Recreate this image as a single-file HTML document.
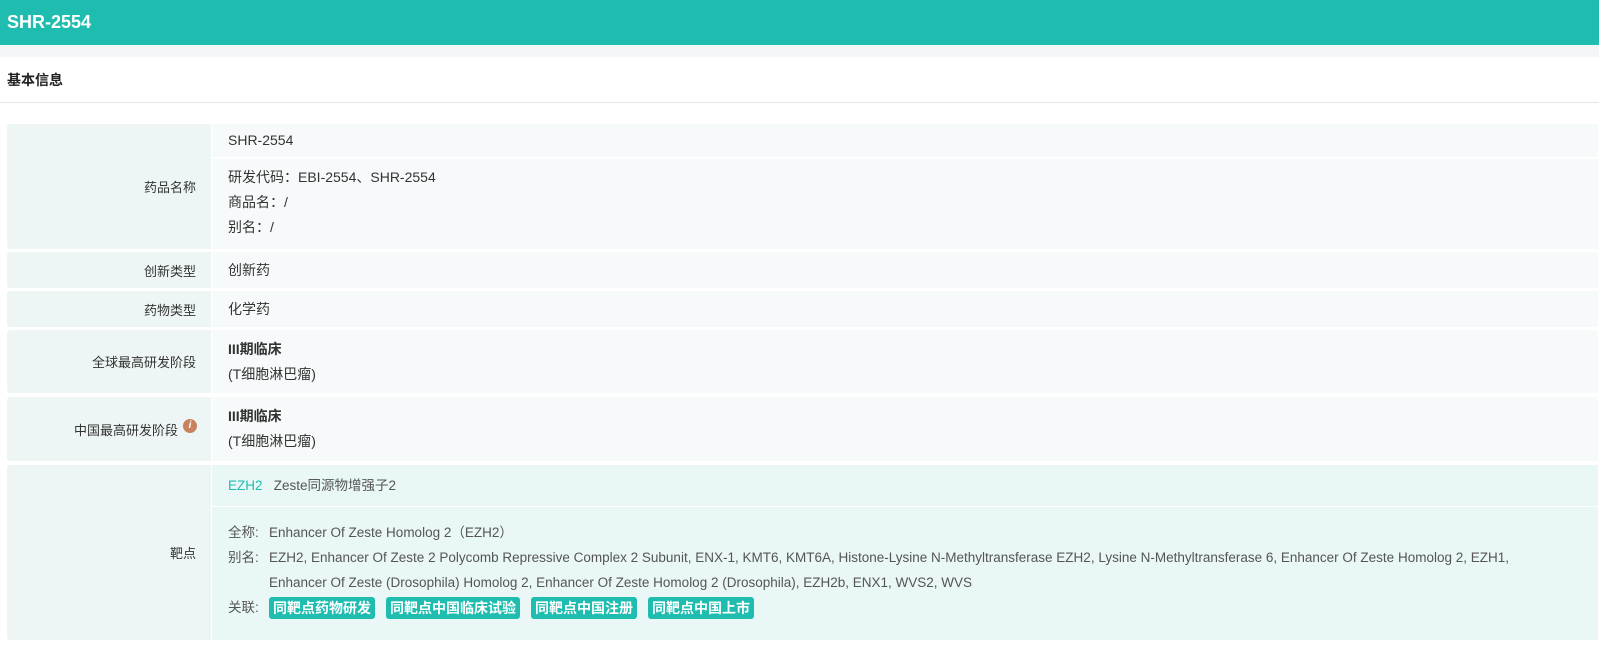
<!DOCTYPE html><html><head><meta charset="utf-8"><style>
*{margin:0;padding:0;box-sizing:border-box}
body{width:1599px;height:652px;overflow:hidden;background:#fff;font-family:"Liberation Sans","Noto Sans CJK SC",sans-serif;color:#333;position:relative}
.a{position:absolute}
.hd{left:0;top:0;width:1599px;height:45px;background:#1fbdb0;color:#fff;font-weight:bold;font-size:18px;line-height:45px;padding-left:7px}
.gap{left:0;top:45px;width:1599px;height:12px;background:#f5f6f7}
.lab{left:7px;width:204px;background:#eef6f5;text-align:right;padding-right:15px;font-size:13px;color:#333;display:flex;align-items:center;justify-content:flex-end;border-radius:3px 0 0 3px}
.val{left:212px;width:1386px;background:#f7fafa;font-size:14px;color:#333;padding-left:16px}
.tag{display:inline-block;background:#1fbdb0;color:#fff;font-weight:bold;font-size:14px;height:22px;line-height:22px;padding:0 4px;border-radius:3px;margin-right:11px}
</style></head><body>
<div class="a hd">SHR-2554</div>
<div class="a gap"></div>
<div class="a" style="left:7px;top:70px;font-size:14px;font-weight:bold;color:#222">基本信息</div>
<div class="a" style="left:0;top:102px;width:1599px;height:1px;background:#e5e5e5"></div>

<div class="a lab" style="top:124px;height:125px">药品名称</div>
<div class="a val" style="top:124px;height:33px;line-height:33px">SHR-2554</div>
<div class="a val" style="top:159px;height:90px;padding-top:6px;line-height:25px">研发代码：EBI-2554、SHR-2554<br>商品名：/<br>别名：/</div>

<div class="a lab" style="top:252px;height:36px">创新类型</div>
<div class="a val" style="top:252px;height:36px;line-height:36px">创新药</div>
<div class="a lab" style="top:291px;height:36px">药物类型</div>
<div class="a val" style="top:291px;height:36px;line-height:36px">化学药</div>
<div class="a lab" style="top:330px;height:63px">全球最高研发阶段</div>
<div class="a val" style="top:330px;height:63px;padding-top:7px;line-height:25px"><b>III期临床</b><br>(T细胞淋巴瘤)</div>
<div class="a lab" style="top:397px;height:64px">中国最高研发阶段<span style="display:inline-block;width:14px;height:14px;border-radius:50%;background:#c9825e;color:#fff;font-size:10px;font-style:italic;font-weight:bold;line-height:14px;text-align:center;margin-left:5px;margin-right:-1px;position:relative;top:-3px">i</span></div>
<div class="a val" style="top:397px;height:64px;padding-top:7px;line-height:25px"><b>III期临床</b><br>(T细胞淋巴瘤)</div>

<div class="a lab" style="top:465px;height:175px">靶点</div>
<div class="a val" style="top:465px;height:41px;line-height:41px;background:#eaf7f7;font-size:13.5px"><span style="color:#1fbdb0">EZH2</span>&nbsp;&nbsp;&nbsp;<span style="color:#555">Zeste同源物增强子2</span></div>
<div class="a val" style="top:507px;height:133px;background:#eaf7f7;font-size:13.5px;padding-top:13px;line-height:25px;color:#555">
<div style="display:flex"><span style="width:41px;flex:none">全称:</span><span>Enhancer Of Zeste Homolog 2（EZH2）</span></div>
<div style="display:flex"><span style="width:41px;flex:none">别名:</span><span>EZH2, Enhancer Of Zeste 2 Polycomb Repressive Complex 2 Subunit, ENX-1, KMT6, KMT6A, Histone-Lysine N-Methyltransferase EZH2, Lysine N-Methyltransferase 6, Enhancer Of Zeste Homolog 2, EZH1,<br>Enhancer Of Zeste (Drosophila) Homolog 2, Enhancer Of Zeste Homolog 2 (Drosophila), EZH2b, ENX1, WVS2, WVS</span></div>
<div style="display:flex;align-items:center"><span style="width:41px;flex:none">关联:</span><span class="tag">同靶点药物研发</span><span class="tag">同靶点中国临床试验</span><span class="tag">同靶点中国注册</span><span class="tag">同靶点中国上市</span></div>
</div>
</body></html>
